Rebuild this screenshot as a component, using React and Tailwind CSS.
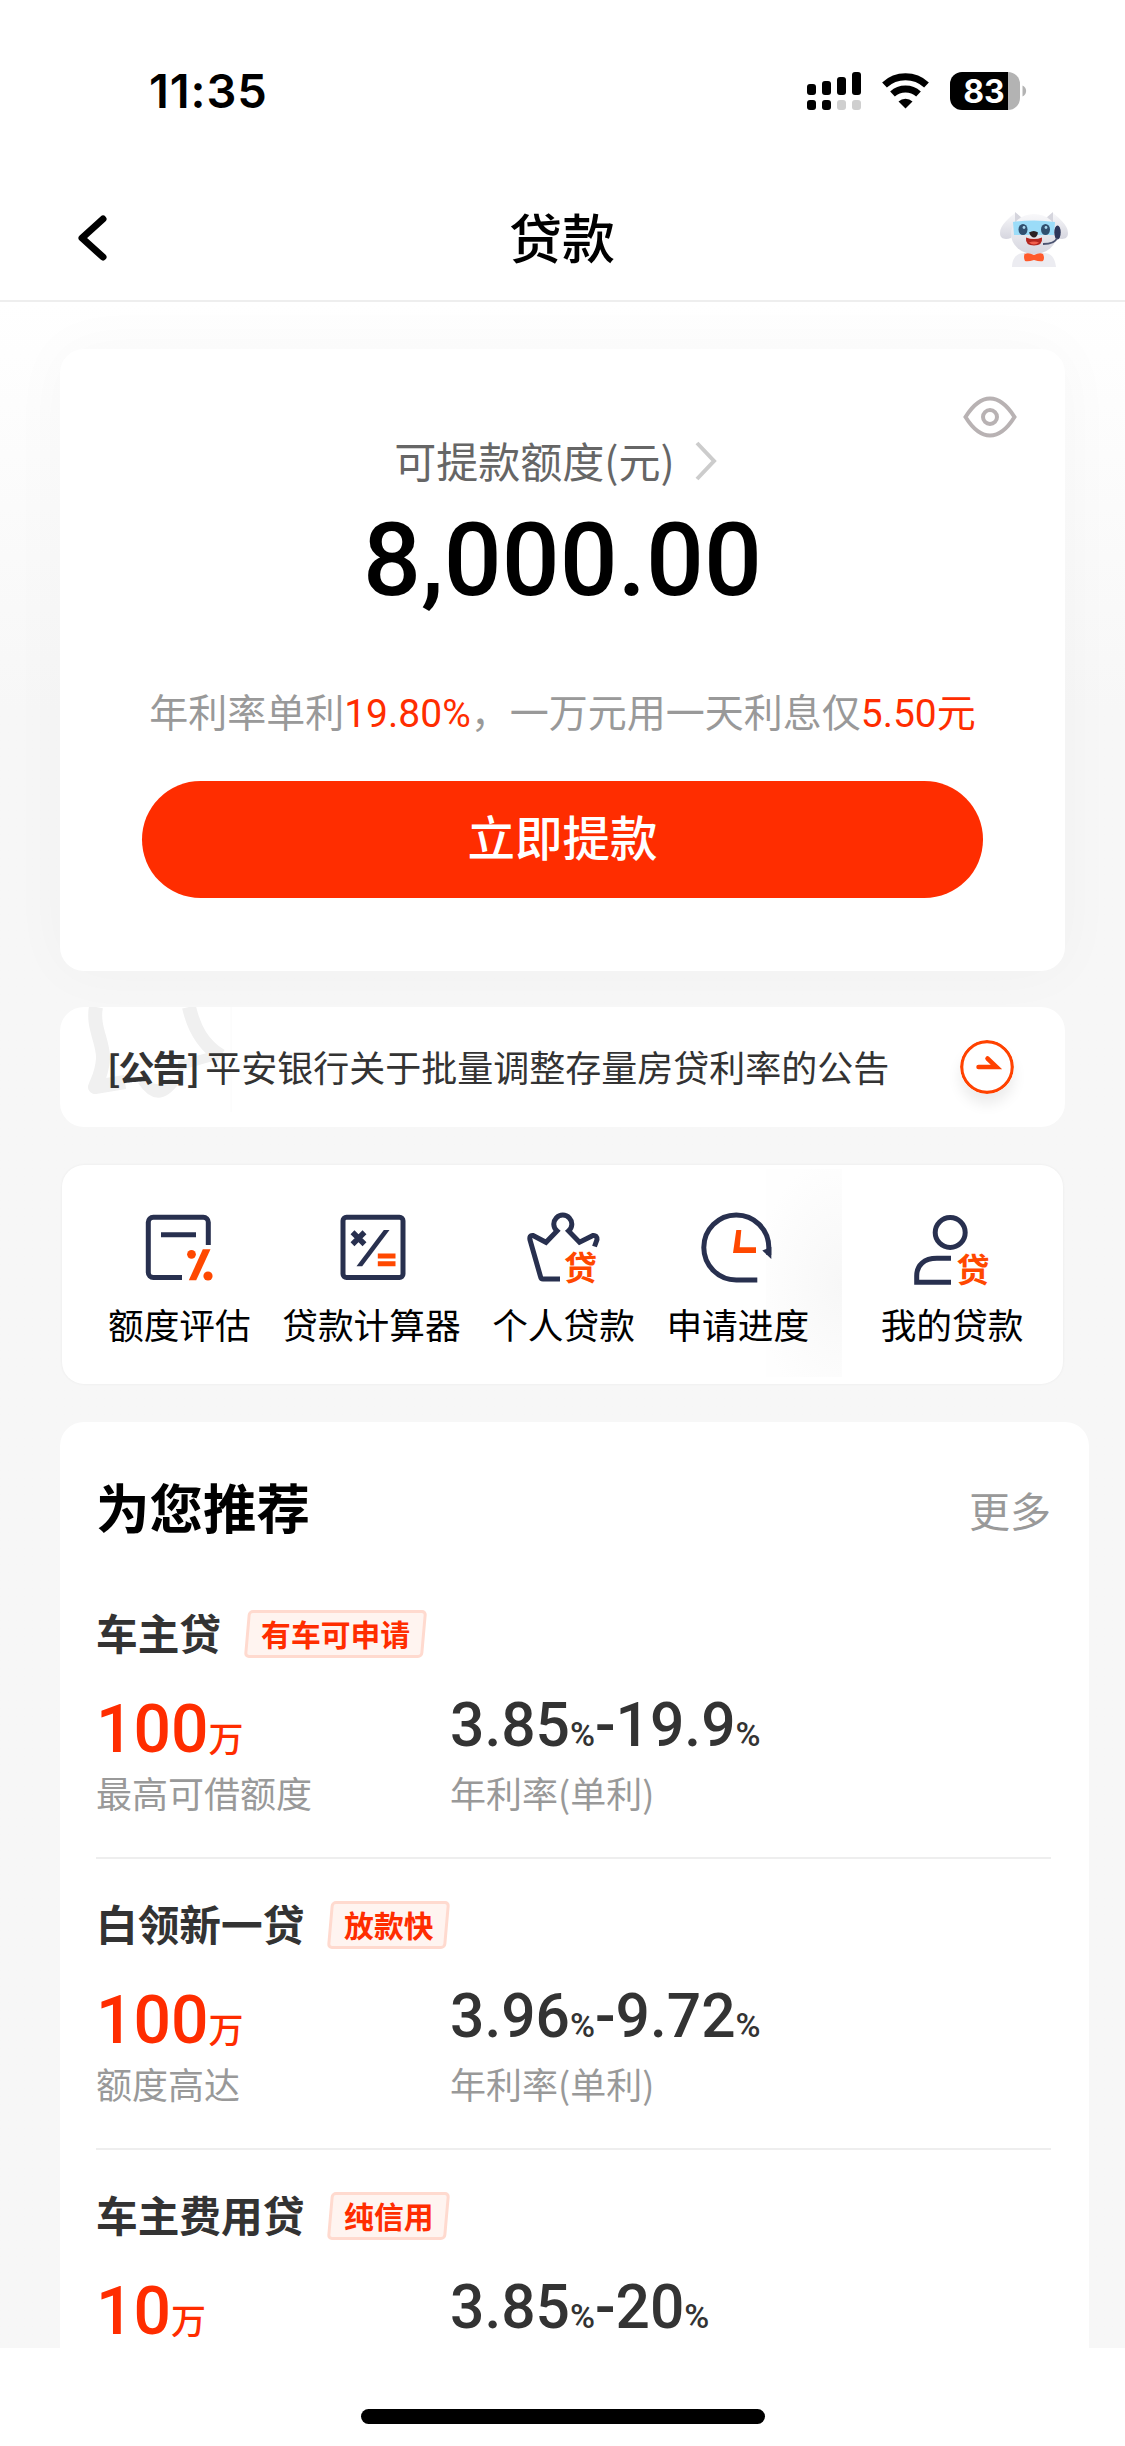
const products = [
  { name: "车主贷", tag: "有车可申请", amount: "100", amountLabel: "最高可借额度", low: "3.85", high: "19.9", rateLabel: "年利率(单利)" },
  { name: "白领新一贷", tag: "放款快", amount: "100", amountLabel: "额度高达", low: "3.96", high: "9.72", rateLabel: "年利率(单利)" },
  { name: "车主费用贷", tag: "纯信用", amount: "10", low: "3.85", high: "20" },
];

function StatusBar() {
  return (
    <div className="flex h-[180px] items-start justify-between pt-[64px] pr-[98px] pl-[149px]">
      <div className="font-['Inter'] text-[47px] leading-[54px] font-semibold tracking-[0.9px]">11:35</div>
      <svg className="mt-[8px]" width="221" height="38" viewBox="0 0 221 38">
        <rect x="1" y="12" width="9" height="11" rx="3" />
        <rect x="16" y="9" width="9" height="14" rx="3" />
        <rect x="31" y="5" width="9" height="18" rx="3" />
        <rect x="46" y="0" width="9" height="23" rx="3" />
        <rect x="1" y="28" width="9" height="10" rx="3" />
        <rect x="16" y="28" width="9" height="10" rx="3" />
        <rect x="31" y="28" width="9" height="10" rx="3" fill="#cfcfcf" />
        <rect x="46" y="28" width="9" height="10" rx="3" fill="#cfcfcf" />
        <g fill="none" stroke="#000" strokeWidth="7">
          <path d="M78.500 13a31 31 0 0 1 42 0" />
          <path d="M86.500 22a19.500 19.500 0 0 1 26 0" />
        </g>
        <path d="M92.500 29.500a10.500 10.500 0 0 1 14 0L99.500 36.500z" />
        <path d="M156 0H202V38H156a12 12 0 0 1-12-12V12A12 12 0 0 1 156 0z" />
        <path d="M202 0a12 12 0 0 1 12 12v14a12 12 0 0 1-12 12z" fill="#b3b3b3" />
        <path d="M216.500 13.500a6 6 0 0 1 0 11z" fill="#b3b3b3" />
        <text x="178" y="31" textAnchor="middle" fill="#fff" fontFamily="Inter" fontWeight="700" fontSize="32">83</text>
      </svg>
    </div>
  );
}

function Mascot() {
  return (
    <svg width="70" height="58" viewBox="0 0 70 58">
      <defs>
        <linearGradient id="fur" x1="0" y1="0" x2="0" y2="1">
          <stop offset="0" stopColor="#f8f8fa" />
          <stop offset="1" stopColor="#d6d6df" />
        </linearGradient>
      </defs>
      <path d="M13 57c0-8 4-14 12-14h20c8 0 11 6 12 14z" fill="#ececf1" />
      <path d="M16 3C10 8 1 15 1 23c0 6 5 7 11 5l8-18z" fill="url(#fur)" />
      <path d="M54 3c6 5 15 12 15 20 0 6-5 7-11 5l-8-18z" fill="url(#fur)" />
      <path d="M16 2l7 6-7 6zM54 2l-7 6 7 6z" fill="#d5d5dd" />
      <ellipse cx="35" cy="24" rx="23" ry="20" fill="url(#fur)" />
      <path d="M14 12q21-3 42 0l-1 13H15z" fill="#9bdcf8" />
      <ellipse cx="24" cy="19.500" rx="4.500" ry="5.500" fill="#30506f" />
      <ellipse cx="46.500" cy="19.500" rx="4.500" ry="5.500" fill="#30506f" />
      <circle cx="25" cy="17.500" r="1.400" fill="#a9d8ef" />
      <circle cx="47" cy="17.500" r="1.400" fill="#a9d8ef" />
      <path d="M30 22.500q5-3 9 0-1 5-4 5t-5-5z" fill="#2c2224" />
      <path d="M27 27.500q8 3 16 0 1 8-8 8-9 0-8-8z" fill="#b3261f" />
      <path d="M30 32.500q5-2 10 0-5 4-10 0z" fill="#f2604d" />
      <ellipse cx="58.500" cy="22.500" rx="3.200" ry="7" fill="#2c3558" />
      <path d="M58 28q-2 6-14 6" fill="none" stroke="#4b5470" strokeWidth="1.800" />
      <path d="M26 44q3-2 9 1 6-3 9-1 2 4 0 7-3 1-9-1-6 2-9 1-2-4 0-8z" fill="#ff5a2b" />
    </svg>
  );
}

function Header() {
  return (
    <header className="flex h-[122px] items-start justify-between border-b-2 border-[#eeeeee] pt-[26px] pr-[56px] pl-[75px]">
      <svg className="mt-[8px]" width="50" height="48" viewBox="0 0 50 48">
        <path d="M28 5L7 24l21 19" fill="none" stroke="#000" strokeWidth="7" strokeLinecap="round" strokeLinejoin="round" />
      </svg>
      <h1 className="text-[53px] leading-[60px] font-medium">贷款</h1>
      <div className="mt-[4px] w-[70px]">
        <Mascot />
      </div>
    </header>
  );
}

function QuotaCard() {
  return (
    <section className="flex h-[622px] flex-col items-center rounded-[24px] bg-white shadow-[0_0_60px_rgba(0,0,0,0.03)]">
      <svg className="mt-[47px] mr-[48px] self-end" width="54" height="42" viewBox="0 0 54 42" fill="none" stroke="#b8b2b3" strokeWidth="4">
        <path d="M2.500 21C10 9 18 2.500 27 2.500S44 9 51.500 21C44 33 36 39.500 27 39.500S10 33 2.500 21z" />
        <circle cx="27" cy="21" r="7" />
      </svg>
      <div className="mt-[-9px] mr-[13px] flex items-center text-[42px] leading-[62px] text-[#666666]">
        可提款额度(元)
        <svg className="mt-[2px] ml-[19px]" width="24" height="42" viewBox="0 0 24 42">
          <path d="M3 3l17 18L3 39" fill="none" stroke="#cccccc" strokeWidth="4" />
        </svg>
      </div>
      <div className="mt-[9px] font-['Roboto'] text-[102px] leading-[120px] font-medium">8,000.00</div>
      <p className="mt-[62px] text-[39px] leading-[56px] whitespace-nowrap text-[#999999]">
        年利率单利<span className="font-['Roboto'] text-[#ff2d00]">19.80%</span>，一万元用一天利息仅
        <span className="font-['Roboto','Noto_Sans_CJK_SC',sans-serif] text-[#ff2d00]">5.50元</span>
      </p>
      <button className="mt-[39px] h-[117px] w-[841px] rounded-full bg-[#ff2d00] pb-[8px] text-[47.500px] font-medium text-white">
        立即提款
      </button>
    </section>
  );
}

function Notice() {
  return (
    <section className="relative mt-[36px] flex h-[120px] items-center overflow-hidden rounded-[24px] bg-white pr-[51px] pl-[47px] text-[#333333]">
      {/* faint bell behind the text */}
      <svg className="absolute top-0 left-0" width="180" height="120" viewBox="0 0 180 120">
        <g fill="none" stroke="#f0f0f0" strokeWidth="14">
          <path d="M36 0c-4 20 8 36 7 52-1 14-4 18-8 28l30-5" strokeLinejoin="round" />
          <path d="M129 0c5 22 14 38 32 49" />
        </g>
        <path d="M78 76q20 30 42-1l-10-4q-10 10-24 3zM118 54l36-10 6 8-42 12z" fill="#f0f0f0" />
        <path d="M171 0v105" stroke="#fafafa" strokeWidth="1" />
      </svg>
      <span className="relative -mt-[2px] text-[36px] font-bold tracking-[-2px]">[公告]</span>
      <span className="relative -mt-[2px] ml-[7px] text-[36px]">平安银行关于批量调整存量房贷利率的公告</span>
      <svg className="relative ml-auto rounded-full shadow-[0_10px_14px_rgba(0,0,0,0.08)]" width="54" height="54" viewBox="0 0 54 54">
        <circle cx="27" cy="27" r="25.300" fill="#fff" stroke="#ff4200" strokeWidth="3.200" />
        <path d="M18.500 27h18L27.500 18.500" fill="none" stroke="#ff4200" strokeWidth="4.500" strokeLinecap="round" />
      </svg>
    </section>
  );
}

function Shortcut({ label, children }) {
  return (
    <div className="flex flex-col items-center">
      <svg className="h-[78px] w-[80px] overflow-visible" viewBox="0 0 80 78" fill="none" stroke="#28304f" strokeWidth="5">
        {children}
      </svg>
      <span className="mt-[11px] text-[35.700px] leading-[52px] whitespace-nowrap text-black">{label}</span>
    </div>
  );
}

function LoanMark({ x, y }) {
  return (
    <text x={x} y={y} fill="#ff4800" stroke="none" fontSize="33" fontWeight="700">
      贷
    </text>
  );
}

function Shortcuts() {
  return (
    <section className="relative mx-[2px] mt-[38px] h-[219px] rounded-[22px] bg-white pt-[44px] pl-[46px] shadow-[0_0_3px_rgba(0,0,0,0.06)]">
      <div className="absolute top-[4px] left-[704px] h-[208px] w-[76px] bg-radial-[at_100%_55%] from-[#f7f7f7] to-[#fefefe] to-80%" />
      <div className="relative flex gap-[31.500px]">
        <Shortcut label="额度评估">
          <path d="M69.300 36V13.200a5 5 0 0 0-5-5h-50a5 5 0 0 0-5 5v50.300a5 5 0 0 0 5 5H43" />
          <path d="M22 25.700h35" />
          <g fill="#ff4800" stroke="none">
            <circle cx="52.500" cy="45.300" r="4.400" />
            <circle cx="69" cy="67" r="4.600" />
            <path d="M63.800 40.300h7.700L57.200 71.300h-7.400z" />
          </g>
        </Shortcut>
        <Shortcut label="贷款计算器">
          <rect x="12" y="8.200" width="60" height="60.300" rx="3.500" />
          <path d="M21.500 23.300l12 12M33.500 23.300l-12 12" strokeWidth="5.500" />
          <path d="M52.800 21h5.700L31.200 57.300h-5.700z" fill="#28304f" stroke="none" />
          <path d="M46.800 47h17.700M46.800 54.700h17.700" stroke="#ff4800" />
        </Shortcut>
        <Shortcut label="个人贷款">
          <path d="M36 70H19q-2 0-2.500-2.500L6 31q-1-5 3-4.500L22 33.300 33 22a9 9 0 1 1 11.600 0L55.500 33.300 69 26.500q4-.5 4 4l-2.500 7" />
          <LoanMark x={40} y={71} />
        </Shortcut>
        <Shortcut label="申请进度">
          <path d="M70.800 46v-7.700a32.500 32.500 0 1 0-32.500 32.700h21" />
          <path d="M64.300 41.500L73.300 50V38z" fill="#28304f" stroke="none" />
          <path d="M38.300 21h5l-1.600 17.300H58V44H35z" fill="#ff4800" stroke="none" />
        </Shortcut>
        <div className="ml-[40px]">
          <Shortcut label="我的贷款">
            <circle cx="38.200" cy="23.500" r="15" />
            <path d="M39 49.300H25C12 49.300 4.700 56 4.700 67v6.300H39" />
            <LoanMark x={44.5} y={73} />
          </Shortcut>
        </div>
      </div>
    </section>
  );
}

function Tag({ children }) {
  return (
    <span className="ml-[25px] flex h-[48px] -skew-x-5 items-center rounded-[5px] border-[3px] border-[#ffdacf] bg-[#fff4f0] px-[12px]">
      <span className="-mt-[2px] skew-x-5 text-[29.800px] leading-[40px] font-bold text-[#ff2d00]">{children}</span>
    </span>
  );
}

function Product({ item }) {
  return (
    <article className="h-[291px] border-b-2 border-[#eeeeee] pt-[35px]">
      <div className="flex h-[62px] items-center">
        <h3 className="-mt-[4px] text-[41.700px] leading-[58px] font-bold text-[#333333]">{item.name}</h3>
        <Tag>{item.tag}</Tag>
      </div>
      <div className="flex">
        <div className="w-[354px] pt-[30px]">
          <div className="font-['Roboto','Noto_Sans_CJK_SC',sans-serif] text-[66px] leading-[70px] font-medium text-[#ff2d00]">
            {item.amount}
            <span className="text-[35px] leading-none">万</span>
          </div>
          {item.amountLabel && (
            <div className="mt-[1px] text-[36px] leading-[52px] text-[#999999]">{item.amountLabel}</div>
          )}
        </div>
        <div className="pt-[26px]">
          <div className="font-['Roboto'] text-[60.500px] leading-[70px] font-medium text-[#333333]">
            {item.low}
            <span className="text-[34px] leading-none">%</span>-{item.high}
            <span className="text-[34px] leading-none">%</span>
          </div>
          {item.rateLabel && (
            <div className="mt-[5px] text-[36px] leading-[52px] text-[#999999]">{item.rateLabel}</div>
          )}
        </div>
      </div>
    </article>
  );
}

function Recommendations() {
  return (
    <section className="mt-[38px] -mr-[24px] rounded-t-[24px] bg-white pr-[38px] pl-[36px]">
      <div className="flex h-[146px] items-center justify-between pt-[22px]">
        <h2 className="text-[53.500px] leading-[80px] font-bold">为您推荐</h2>
        <a className="pt-[6px] text-[41px] leading-[60px] text-[#999999]">更多</a>
      </div>
      {products.map((item) => (
        <Product key={item.name} item={item} />
      ))}
    </section>
  );
}

function App() {
  return (
    <div className="flex h-[2446px] w-[1125px] flex-col overflow-hidden bg-white font-['Noto_Sans_CJK_SC',sans-serif] text-black">
      <StatusBar />
      <Header />
      <main className="h-[2046px] overflow-hidden bg-linear-to-b from-white to-[#f7f7f7] to-20% px-[60px] pt-[47px]">
        <QuotaCard />
        <Notice />
        <Shortcuts />
        <Recommendations />
      </main>
      <div className="mx-auto mt-[61px] h-[15px] w-[404px] rounded-full bg-black" />
    </div>
  );
}

export default App;
